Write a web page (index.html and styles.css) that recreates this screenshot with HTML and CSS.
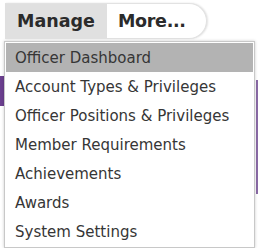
FILE: index.html
```html
<!DOCTYPE html>
<html lang="en">
<head>
  <meta charset="UTF-8" />
  <meta name="viewport" content="width=device-width, initial-scale=1.0"/>
  <title>Manage Menu</title>
  <link rel="stylesheet" href="styles.css">
</head>
<body>

<div class="page">
  <div class="backdrop-left"></div>
  <div class="backdrop-right"></div>

  <nav class="navbar">
    <a class="nav-item active" href="#">Manage</a>
    <a class="nav-item" href="#">More...</a>
  </nav>

  <ul class="dropdown">
    <li class="selected"><a href="#">Officer Dashboard</a></li>
    <li><a href="#">Account Types &amp; Privileges</a></li>
    <li><a href="#">Officer Positions &amp; Privileges</a></li>
    <li><a href="#">Member Requirements</a></li>
    <li><a href="#">Achievements</a></li>
    <li><a href="#">Awards</a></li>
    <li><a href="#">System Settings</a></li>
  </ul>
</div>

</body>
</html>
```

FILE: styles.css
```css
body {
  margin: 0;
  padding: 0;
  font-family: "DejaVu Sans", Verdana, sans-serif;
  background: #fff;
}

.page {
  position: relative;
  width: 258px;
  height: 248px;
  overflow: hidden;
  padding-top: 3px;
  box-sizing: border-box;
}

/* bits of the page peeking out behind the menu */
.backdrop-left {
  position: absolute;
  left: 0;
  top: 76px;
  width: 4px;
  height: 30px;
  background: #6b3f8f;
}

.backdrop-right {
  position: absolute;
  right: 0;
  top: 80px;
  width: 2px;
  height: 114px;
  background: #8a6aa6;
}

.navbar {
  display: inline-flex;
  margin-left: 5px;
  height: 34px;
  background: #fff;
  border: 1px solid #e2e2e2;
  border-left: none;
  border-radius: 0 18px 18px 0;
  box-shadow: 1px 0 2px rgba(0,0,0,0.12);
}

.nav-item {
  display: flex;
  align-items: center;
  padding: 0 12px;
  font-size: 17.5px;
  font-weight: bold;
  color: #2b2b2b;
  text-decoration: none;
}

.nav-item.active {
  background: #e0e0e0;
}

.nav-item:last-child {
  padding-left: 11px;
  padding-right: 20px;
  letter-spacing: -0.3px;
}

.dropdown {
  position: absolute;
  top: 41px;
  left: 4px;
  width: 247px;
  margin: 0;
  padding: 1px;
  list-style: none;
  background: #fff;
  border: 1px solid #c8c8c8;
  box-shadow: 0 0 3px rgba(0,0,0,0.2);
}

.dropdown li a {
  display: block;
  height: 28px;
  padding-top: 1px;
  line-height: 29px;
  padding-left: 9px;
  font-size: 15px;
  color: #363636;
  text-decoration: none;
  white-space: nowrap;
}

.dropdown li.selected a {
  background: #b3b3b3;
}
```
